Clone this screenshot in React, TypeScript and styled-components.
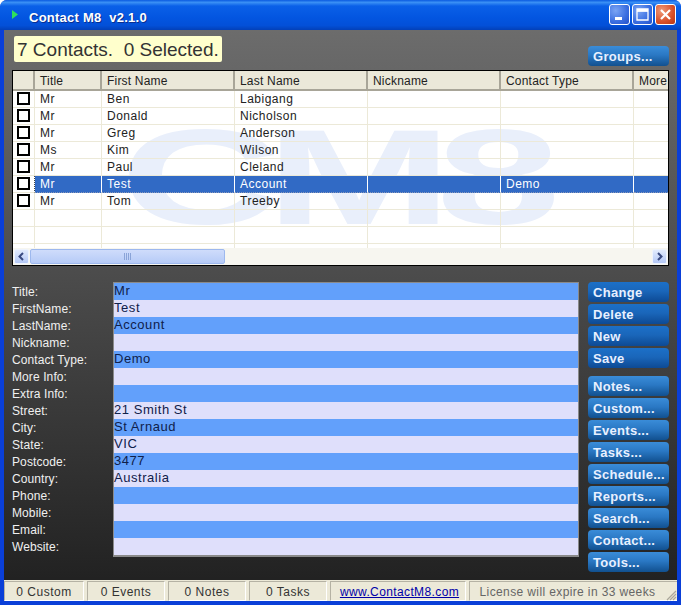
import styled, { createGlobalStyle } from "styled-components";

const GlobalStyle = createGlobalStyle`
  html, body {
    margin: 0;
    padding: 0;
    background: #fff;
  }
  * {
    box-sizing: border-box;
  }
`;

const Window = styled.div`
  width: 681px;
  height: 605px;
  display: flex;
  flex-direction: column;
  background: #0a3fd8;
  border-radius: 7px 7px 0 0;
  overflow: hidden;
  font-family: "Liberation Sans", Arial, sans-serif;
`;

const TitleBar = styled.div`
  height: 30px;
  flex: none;
  display: flex;
  align-items: center;
  padding: 0 5px 0 12px;
  background: linear-gradient(180deg, #0a5ae0 0%, #3a90f5 8%, #0a60e8 20%, #0355e0 60%, #0350d8 85%, #0340b8 100%);
`;

const PlayIcon = styled.svg`
  width: 6px;
  height: 9px;
  margin-right: 11px;
  margin-top: -1px;
`;

const TitleText = styled.div`
  flex: 1;
  color: #fff;
  font: bold 13px "Liberation Sans", Arial, sans-serif;
  letter-spacing: 0.25px;
  white-space: pre;
  text-shadow: 1px 1px 0 #0a2f90;
  margin-top: 4px;
`;

const CaptionButtons = styled.div`
  display: flex;
  gap: 2px;
  margin-top: -1px;
`;

const CaptionButton = styled.div<{ $close?: boolean }>`
  width: 21px;
  height: 21px;
  border: 1px solid #fff;
  border-radius: 3px;
  display: flex;
  align-items: center;
  justify-content: center;
  background: ${(p) =>
    p.$close
      ? "radial-gradient(circle at 30% 30%, #ef9a78, #d8502a 60%, #b83510)"
      : "radial-gradient(circle at 30% 30%, #7aa4f4, #3a6ee0 60%, #2450c8)"};
`;

const Body = styled.div`
  flex: 1;
  min-height: 0;
  margin: 0 4px;
  display: flex;
  flex-direction: column;
  background: linear-gradient(180deg, #6c6c6c 0%, #4a4a4a 45%, #1f1f1f 100%);
`;

const TopRow = styled.div`
  height: 40px;
  flex: none;
  padding: 6px 8px 0;
  display: flex;
  justify-content: space-between;
  align-items: flex-start;
`;

const CountBadge = styled.div`
  height: 26px;
  padding: 0 3px;
  margin-left: 2px;
  background: #ffffcc;
  border-radius: 2px;
  color: #333;
  font-size: 19px;
  line-height: 27px;
  white-space: pre;
`;

const NavButton = styled.div<{ $dark?: boolean }>`
  width: 81px;
  height: 20px;
  flex: none;
  border-radius: 4px;
  padding: 1px 0 0 5px;
  color: #e8f0ff;
  font: bold 13px/20px "Liberation Sans", Arial, sans-serif;
  letter-spacing: 0.3px;
  white-space: pre;
  background: ${(p) =>
    p.$dark
      ? "linear-gradient(180deg, #1c70c8 0%, #1a66ba 45%, #0d4a94 100%)"
      : "linear-gradient(180deg, #3a8cd8 0%, #2a78c4 45%, #11508f 100%)"};
`;

const GroupsButton = styled(NavButton)`
  margin-top: 10px;
`;

const Grid = styled.div`
  position: relative;
  margin: 0 8px;
  height: 196px;
  flex: none;
  display: flex;
  flex-direction: column;
  border: 1px solid #000;
  background: #fff;
  overflow: hidden;
`;

const Watermark = styled.div`
  position: absolute;
  left: 107px;
  top: 18px;
  color: #e9effb;
  font: bold 136px/136px "Liberation Sans", Arial, sans-serif;
  letter-spacing: -10px;
  white-space: pre;
  transform: scaleX(1.65);
  transform-origin: left top;
`;

const HeaderRow = styled.div`
  position: relative;
  display: flex;
  height: 20px;
  flex: none;
  background: #ebe8d9;
  border-bottom: 2px solid #a8a598;
`;

const HeaderCell = styled.div<{ $w: number }>`
  width: ${(p) => p.$w}px;
  flex: none;
  padding-left: 5px;
  border-right: 2px solid #a8a598;
  color: #222;
  font-size: 12px;
  line-height: 20px;
  letter-spacing: 0.2px;
  overflow: hidden;
  white-space: nowrap;
`;

const Rows = styled.div`
  position: relative;
  flex: 1;
  min-height: 0;
  overflow: hidden;
`;

const Row = styled.div`
  position: relative;
  display: flex;
  height: 17px;
`;

const Cell = styled.div<{ $w: number; $selected?: boolean }>`
  width: ${(p) => p.$w}px;
  flex: none;
  padding-left: 5px;
  border-right: 1px solid ${(p) => (p.$selected ? "#fff" : "#ece9d8")};
  border-bottom: 1px ${(p) => (p.$selected ? "dotted #8a98b8" : "solid #ece9d8")};
  color: ${(p) => (p.$selected ? "#fff" : "#222")};
  background: ${(p) => (p.$selected ? "#316ac5" : "transparent")};
  font-size: 12px;
  line-height: 16px;
  letter-spacing: 0.5px;
  white-space: nowrap;
  overflow: hidden;
`;

const CheckCell = styled.div<{ $w: number; $selected?: boolean }>`
  width: ${(p) => p.$w}px;
  flex: none;
  padding: 1px 0 0 4px;
  border-right: 1px ${(p) => (p.$selected ? "dotted #444" : "solid #ece9d8")};
  border-bottom: 1px solid #ece9d8;
`;

const CheckBox = styled.div`
  width: 13px;
  height: 13px;
  border: 2px solid #000;
  background: #fff;
`;

const ScrollBar = styled.div`
  position: relative;
  height: 17px;
  flex: none;
  display: flex;
  align-items: center;
  background: #f7f6f0;
`;

const ScrollArrow = styled.div`
  width: 15px;
  height: 15px;
  flex: none;
  margin: 0 1px;
  border: 1px solid #eef3fd;
  border-radius: 2px;
  background: linear-gradient(180deg, #e2ebfd, #b4c8f6);
  display: flex;
  align-items: center;
  justify-content: center;
`;

const ScrollThumb = styled.div`
  width: 195px;
  height: 15px;
  flex: none;
  border: 1px solid #9db8ee;
  border-radius: 2px;
  background: linear-gradient(180deg, #cfdcfb, #b6cbf7);
  display: flex;
  align-items: center;
  justify-content: center;
`;

const ScrollSpace = styled.div`
  flex: 1;
`;

const Detail = styled.div`
  flex: 1;
  min-height: 0;
  display: flex;
  padding: 16px 8px 0;
`;

const Labels = styled.div`
  width: 101px;
  flex: none;
  padding-top: 2px;
`;

const Label = styled.div`
  height: 17px;
  color: #f0f0f0;
  font-size: 12px;
  line-height: 17px;
  letter-spacing: 0.1px;
  white-space: nowrap;
`;

const Fields = styled.div`
  width: 466px;
  height: 275px;
  flex: none;
  border: 1px solid #8a8a8a;
  border-bottom-width: 2px;
`;

const Field = styled.div<{ $odd: boolean }>`
  height: 17px;
  background: ${(p) => (p.$odd ? "#62a0fb" : "#dfdffb")};
  color: #10204a;
  font-size: 13px;
  line-height: 15px;
  letter-spacing: 0.55px;
  white-space: nowrap;
`;

const ActionColumn = styled.div`
  margin-left: 9px;
  display: flex;
  flex-direction: column;
  gap: 2px;
`;

const ActionSpacer = styled.div`
  height: 4px;
`;

const StatusBar = styled.div`
  height: 21px;
  flex: none;
  display: flex;
  padding-top: 1px;
  background: #ece9d8;
  color: #333;
  font-size: 12px;
  letter-spacing: 0.5px;
  position: relative;
`;

const StatusCell = styled.div<{ $w: number }>`
  width: ${(p) => p.$w}px;
  flex: none;
  margin-right: 3px;
  border: 1px solid;
  border-color: #b5b2a4 #fff #fff #b5b2a4;
  text-align: center;
  line-height: 20px;
  white-space: nowrap;
`;

const LinkCell = styled(StatusCell)`
  padding-left: 3px;
  letter-spacing: 0.38px;
`;

const LicenseCell = styled(StatusCell)`
  margin-right: 0;
  padding-right: 12px;
  border-right: none;
  color: #666;
  letter-spacing: 0.38px;
`;

const SiteLink = styled.a`
  color: #0000a8;
  text-decoration: underline;
`;

const Grip = styled.svg`
  position: absolute;
  right: 0;
  bottom: 0;
  width: 12px;
  height: 12px;
`;

const BottomEdge = styled.div`
  height: 4px;
  flex: none;
  background: #0a3fd8;
`;

const columns = [67, 133, 133, 133, 133, 36];
const headers = ["Title", "First Name", "Last Name", "Nickname", "Contact Type", "More"];
const blank = ["", "", "", "", "", ""];

const contacts = [
  ["Mr", "Ben", "Labigang", "", "", ""],
  ["Mr", "Donald", "Nicholson", "", "", ""],
  ["Mr", "Greg", "Anderson", "", "", ""],
  ["Ms", "Kim", "Wilson", "", "", ""],
  ["Mr", "Paul", "Cleland", "", "", ""],
  ["Mr", "Test", "Account", "", "Demo", ""],
  ["Mr", "Tom", "Treeby", "", "", ""],
  blank,
  blank,
  blank,
];

const details = [
  ["Title:", "Mr"],
  ["FirstName:", "Test"],
  ["LastName:", "Account"],
  ["Nickname:", ""],
  ["Contact Type:", "Demo"],
  ["More Info:", ""],
  ["Extra Info:", ""],
  ["Street:", "21 Smith St"],
  ["City:", "St Arnaud"],
  ["State:", "VIC"],
  ["Postcode:", "3477"],
  ["Country:", "Australia"],
  ["Phone:", ""],
  ["Mobile:", ""],
  ["Email:", ""],
  ["Website:", ""],
];

const recordActions = ["Change", "Delete", "New", "Save"];
const pageActions = ["Notes...", "Custom...", "Events...", "Tasks...", "Schedule...", "Reports...", "Search...", "Contact...", "Tools..."];

export default function App() {
  return (
    <>
      <GlobalStyle />
      <Window>
        <TitleBar>
          <PlayIcon viewBox="0 0 6 9">
            <path d="M0 0 L6 4.5 L0 9 Z" fill="#2fe05a" />
          </PlayIcon>
          <TitleText>Contact M8  v2.1.0</TitleText>
          <CaptionButtons>
            <CaptionButton>
              <svg width="13" height="13" viewBox="0 0 13 13">
                <rect x="2" y="9" width="7" height="3" fill="#fff" />
              </svg>
            </CaptionButton>
            <CaptionButton>
              <svg width="13" height="13" viewBox="0 0 13 13">
                <path d="M1 1 H12 V12 H1 Z M1 3 H12" fill="none" stroke="#fff" strokeWidth="1.3" />
                <rect x="1" y="1" width="11" height="2.5" fill="#fff" />
              </svg>
            </CaptionButton>
            <CaptionButton $close>
              <svg width="13" height="13" viewBox="0 0 13 13">
                <path d="M2 2 L11 11 M11 2 L2 11" stroke="#fff" strokeWidth="2.2" />
              </svg>
            </CaptionButton>
          </CaptionButtons>
        </TitleBar>
        <Body>
          <TopRow>
            <CountBadge>7 Contacts.  0 Selected.</CountBadge>
            <GroupsButton>Groups...</GroupsButton>
          </TopRow>
          <Grid>
            <HeaderRow>
              <HeaderCell $w={22} />
              {headers.map((h, i) => (
                <HeaderCell key={h} $w={columns[i]}>
                  {h}
                </HeaderCell>
              ))}
            </HeaderRow>
            <Rows>
              <Watermark>CM8</Watermark>
              {contacts.map((row, r) => (
                <Row key={r}>
                  <CheckCell $w={22} $selected={r === 5}>
                    {r < 7 && <CheckBox />}
                  </CheckCell>
                  {row.map((value, c) => (
                    <Cell key={c} $w={columns[c]} $selected={r === 5}>
                      {value}
                    </Cell>
                  ))}
                </Row>
              ))}
            </Rows>
            <ScrollBar>
              <ScrollArrow>
                <svg width="9" height="9" viewBox="0 0 9 9">
                  <path d="M6 1 L2.5 4.5 L6 8" fill="none" stroke="#3a4a80" strokeWidth="2" />
                </svg>
              </ScrollArrow>
              <ScrollThumb>
                <svg width="8" height="7" viewBox="0 0 8 7">
                  <path d="M0.5 0 V7 M2.5 0 V7 M4.5 0 V7 M6.5 0 V7" stroke="#8aa4d8" strokeWidth="1" />
                </svg>
              </ScrollThumb>
              <ScrollSpace />
              <ScrollArrow>
                <svg width="9" height="9" viewBox="0 0 9 9">
                  <path d="M3 1 L6.5 4.5 L3 8" fill="none" stroke="#3a4a80" strokeWidth="2" />
                </svg>
              </ScrollArrow>
            </ScrollBar>
          </Grid>
          <Detail>
            <Labels>
              {details.map(([label]) => (
                <Label key={label}>{label}</Label>
              ))}
            </Labels>
            <Fields>
              {details.map(([label, value], i) => (
                <Field key={label} $odd={i % 2 === 0}>
                  {value}
                </Field>
              ))}
            </Fields>
            <ActionColumn>
              {recordActions.map((a) => (
                <NavButton key={a} $dark>
                  {a}
                </NavButton>
              ))}
              <ActionSpacer />
              {pageActions.map((a) => (
                <NavButton key={a}>{a}</NavButton>
              ))}
            </ActionColumn>
          </Detail>
          <StatusBar>
            <StatusCell $w={80}>0 Custom</StatusCell>
            <StatusCell $w={78}>0 Events</StatusCell>
            <StatusCell $w={78}>0 Notes</StatusCell>
            <StatusCell $w={78}>0 Tasks</StatusCell>
            <LinkCell $w={136}>
              <SiteLink href="#">www.ContactM8.com</SiteLink>
            </LinkCell>
            <LicenseCell $w={208}>License will expire in 33 weeks</LicenseCell>
            <Grip viewBox="0 0 12 12">
              <path d="M11 2 L2 11 M11 5 L5 11 M11 8 L8 11" stroke="#aaa69a" strokeWidth="1.2" />
            </Grip>
          </StatusBar>
        </Body>
        <BottomEdge />
      </Window>
    </>
  );
}
